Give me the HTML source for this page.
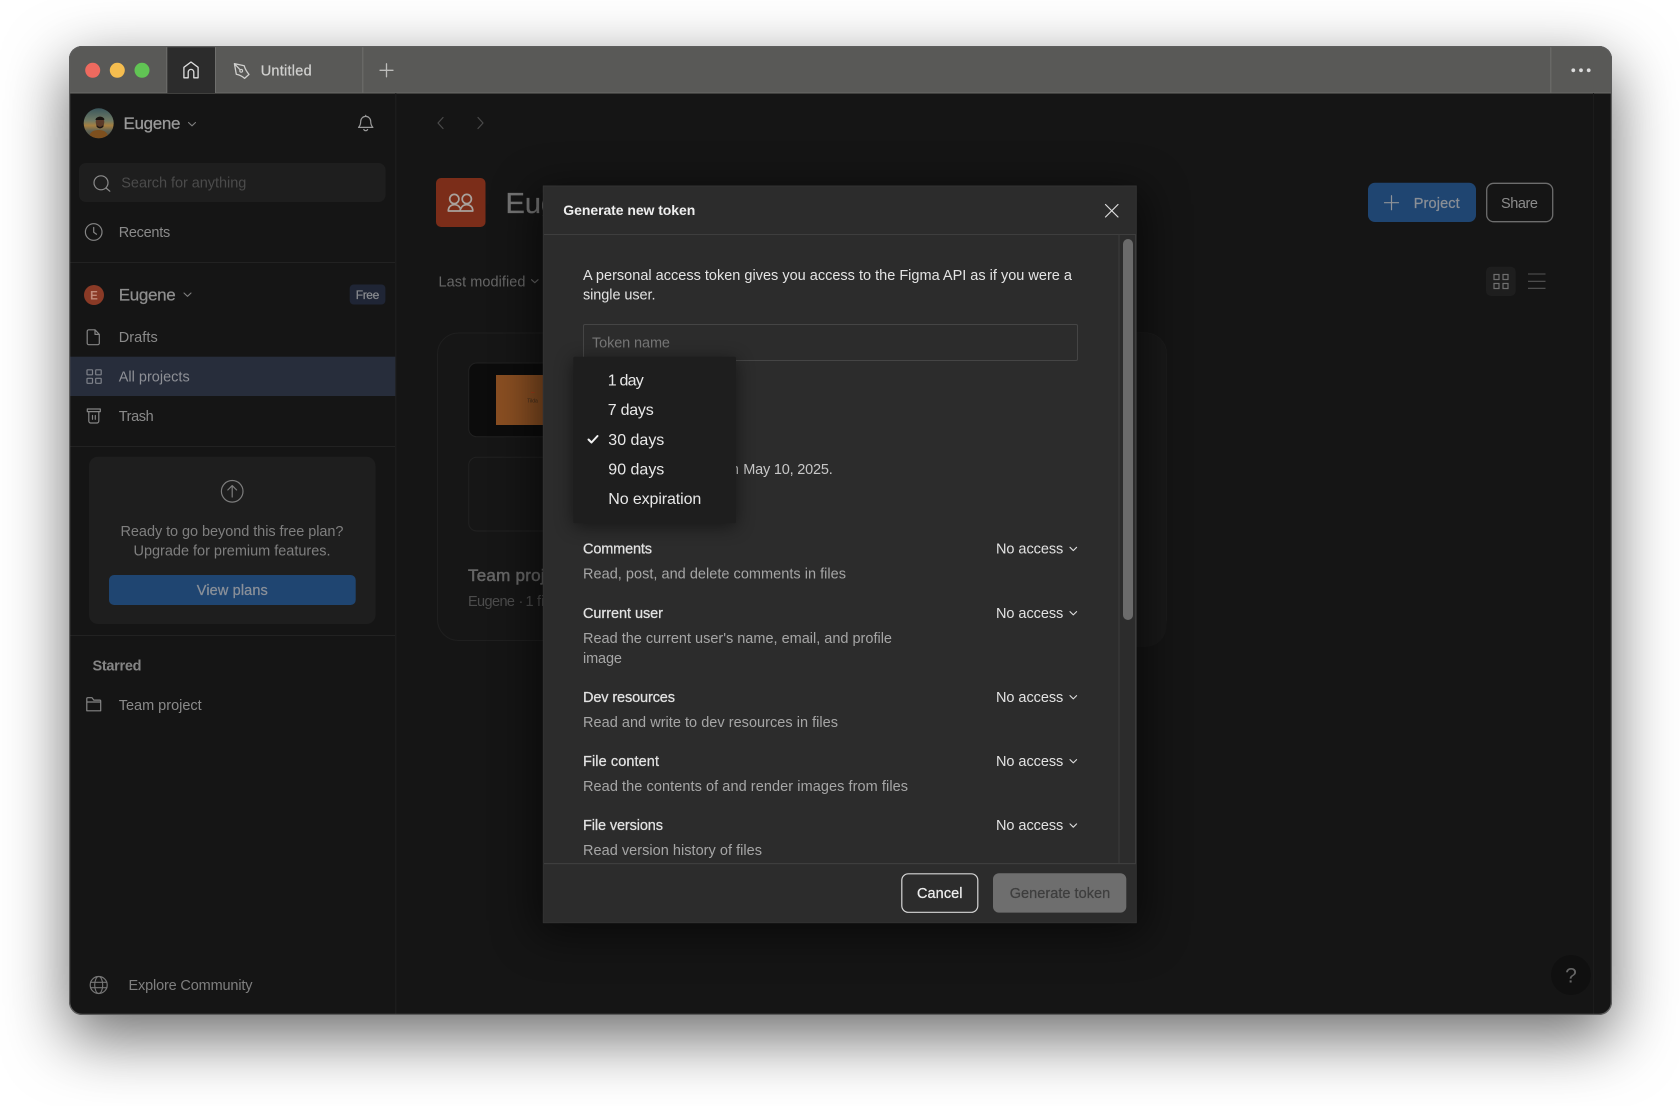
<!DOCTYPE html>
<html lang="en">
<head>
<meta charset="utf-8">
<title>Generate new token</title>
<style>
html,body{margin:0;padding:0;width:1680px;height:1106px;background:#fff;overflow:hidden}
#shadow{position:absolute;left:69px;top:46px;width:1543px;height:969px;border-radius:13px;box-shadow:0 22px 62px 2px rgba(0,0,0,.56)}
svg{position:absolute;left:0;top:0;filter:blur(.35px)}
text{font-family:"Liberation Sans",sans-serif;font-size:14.5px;white-space:pre}
.m{stroke:currentColor;stroke-width:.25px}
.i{fill:none;stroke-linecap:round;stroke-linejoin:round}
</style>
</head>
<body>
<div id="shadow"></div>
<svg width="1680" height="1106" viewBox="0 0 1680 1106" xmlns="http://www.w3.org/2000/svg">
<defs>
<clipPath id="win"><rect x="69" y="46" width="1543" height="969" rx="13"/></clipPath>
<clipPath id="av"><circle cx="98.7" cy="123.3" r="15"/></clipPath>
<filter id="ms" x="-20%" y="-20%" width="140%" height="140%"><feGaussianBlur stdDeviation="22"/></filter>
<filter id="ds" x="-30%" y="-30%" width="160%" height="160%"><feGaussianBlur stdDeviation="9"/></filter>
<linearGradient id="sky" x1="0" y1="0" x2="0" y2="1"><stop offset="0" stop-color="#3a565c"/><stop offset=".4" stop-color="#6f7a64"/><stop offset=".55" stop-color="#a67f40"/><stop offset=".72" stop-color="#5f6254"/><stop offset="1" stop-color="#4a4636"/></linearGradient>
</defs>
<g clip-path="url(#win)">
<rect x="69" y="46" width="1543" height="969" fill="#151515"/>
<!-- titlebar -->
<rect x="69" y="46" width="1543" height="47" fill="#595957"/>
<rect x="69" y="92.5" width="1543" height="1" fill="#6a6a68"/>
<rect x="167" y="47" width="48" height="46" fill="#2c2c2c"/>
<rect x="166.3" y="47" width="1" height="46" fill="#6f6f6d"/>
<rect x="215" y="47" width="1" height="46" fill="#6f6f6d"/>
<rect x="362.3" y="47" width="1" height="46" fill="#6f6f6d"/>
<rect x="1550.3" y="47" width="1" height="46" fill="#6f6f6d"/>
<circle cx="92.7" cy="70.3" r="7.5" fill="#ee6a5f"/>
<circle cx="117.3" cy="70.3" r="7.5" fill="#f5bd4f"/>
<circle cx="142" cy="70.3" r="7.5" fill="#61c454"/>
<path class="i" stroke="#dedede" stroke-width="1.3" d="M183.9 77.8V67.3L191 62l7.1 5.300v10.500h-4.300v-5.600a2.800 2.800 0 0 0-5.600 0v5.600z"/>
<path class="i" stroke="#cfcfcd" stroke-width="1.3" d="M234.4 63.6l9.8 2.2c1 3.3 2.5 6 4.8 8.6l-4.4 4c-2.6-2.5-5.3-3.6-8.3-4.2zM234.6 63.9l5.6 5.9"/>
<circle cx="241.2" cy="70.8" r="1.4" fill="none" stroke="#cfcfcd" stroke-width="1.1"/>
<text x="260.7" y="75.4" fill="#cfcfcd" class="m" style="color:#cfcfcd" textLength="51">Untitled</text>
<path class="i" stroke="#bdbdbb" stroke-width="1.3" d="M380 70.3h13M386.5 63.8v13"/>
<circle cx="1573.3" cy="70.3" r="1.9" fill="#dcdcdc"/><circle cx="1581" cy="70.3" r="1.9" fill="#dcdcdc"/><circle cx="1588.7" cy="70.3" r="1.9" fill="#dcdcdc"/>

<!-- main vertical lines -->
<rect x="395.3" y="93" width="1" height="922" fill="#1f1f1f"/>
<rect x="1593" y="93" width="1" height="922" fill="#1c1c1c"/>

<!-- sidebar top -->
<g clip-path="url(#av)">
<rect x="83" y="108" width="32" height="32" fill="url(#sky)"/>
<path d="M89 140c0-8 4-10 9.500-10s10 2 10 10z" fill="#7d4f1e"/>
<ellipse cx="100" cy="122" rx="4.300" ry="5.500" fill="#5b3a28"/>
<path d="M95.500 120c0-4 8-4.500 9-.5l-1 .5h-7z" fill="#17130f"/>
<path d="M96.500 124c1 3.800 6 3.800 7 0v2.500c-2 2.500-5 2.500-7 0z" fill="#1c140f"/>
</g>
<text x="123.5" y="129" fill="#9a9a9a" class="m" style="color:#9a9a9a;font-size:17px" textLength="57">Eugene</text>
<path class="i" stroke="#7e7e7e" stroke-width="1.1" d="M188.500 122.500l3.500 3.300 3.500-3.300"/>
<path class="i" stroke="#9a9a9a" stroke-width="1.2" d="M358.500 127.400c1.600-1.500 2.200-3 2.200-6a5 5 0 0 1 10 0c0 3 .6 4.500 2.200 6zM363.800 129.500a2.100 2.100 0 0 0 3.800 0M365.700 116.400v-1"/>
<rect x="79" y="163" width="306.500" height="39" rx="7" fill="#1e1e1e"/>
<circle cx="101" cy="182.800" r="7" fill="none" stroke="#8b8b8b" stroke-width="1.200"/>
<path class="i" stroke="#8b8b8b" stroke-width="1.200" d="M106 188l3.800 3.200"/>
<text x="121.300" y="187.700" fill="#4b4b4b" textLength="125">Search for anything</text>
<circle cx="93.700" cy="232" r="8.300" fill="none" stroke="#858585" stroke-width="1.200"/>
<path class="i" stroke="#858585" stroke-width="1.200" d="M93.700 227.500v4.700l2.800 2"/>
<text x="118.700" y="237" fill="#8a8a8a" textLength="51.500">Recents</text>
<rect x="70" y="262" width="325" height="1" fill="#222"/>

<circle cx="94" cy="295" r="10" fill="#8a3a26"/>
<text x="94" y="299.300" fill="#c08a78" text-anchor="middle" style="font-size:11.500px;font-weight:bold">E</text>
<text x="118.700" y="300.500" fill="#8e8e8e" class="m" style="color:#8e8e8e;font-size:17px" textLength="57">Eugene</text>
<path class="i" stroke="#7e7e7e" stroke-width="1.100" d="M184 293l3.500 3.300 3.500-3.300"/>
<rect x="349.700" y="284.500" width="35.700" height="20" rx="4" fill="#1f2535"/>
<text x="367.500" y="298.900" fill="#8a8c90" text-anchor="middle" class="m" style="color:#8a8c90;font-size:12px" textLength="23.500">Free</text>

<path class="i" stroke="#858585" stroke-width="1.200" d="M88.700 329.800h6.300l4.300 4.600v8.800a1.500 1.500 0 0 1-1.500 1.500h-9.100a1.500 1.500 0 0 1-1.500-1.500v-11.900a1.500 1.500 0 0 1 1.500-1.500zM95 329.800v4.600h4.300"/>
<text x="118.700" y="342" fill="#8a8a8a" textLength="39">Drafts</text>
<rect x="70" y="356.700" width="325.300" height="39.300" fill="#272d3b"/>
<g fill="none" stroke="#7f828a" stroke-width="1.200">
<rect x="87" y="369.800" width="5.500" height="5" rx=".6"/><rect x="95.700" y="369.800" width="5.500" height="5" rx=".6"/>
<rect x="87" y="378.300" width="5.500" height="5" rx=".6"/><rect x="95.700" y="378.300" width="5.500" height="5" rx=".6"/>
</g>
<text x="118.700" y="381.300" fill="#8e9096" textLength="71">All projects</text>
<path class="i" stroke="#858585" stroke-width="1.200" d="M87.300 409h13v2.600h-13zM88.800 411.600v9.400a2 2 0 0 0 2 2h6a2 2 0 0 0 2-2v-9.400M92.500 415.500v3.800M95.300 415.500v3.800"/>
<text x="118.700" y="421" fill="#8a8a8a" textLength="35">Trash</text>
<rect x="70" y="446" width="325" height="1" fill="#222"/>

<rect x="89" y="456.700" width="286.500" height="167.300" rx="9" fill="#1e1e1e"/>
<circle cx="232.200" cy="491.300" r="10.800" fill="none" stroke="#7c7c7c" stroke-width="1.200"/>
<path class="i" stroke="#7c7c7c" stroke-width="1.200" d="M232.200 497v-11M227.800 490l4.400-4.400 4.400 4.400"/>
<text x="120.500" y="536" fill="#7f7f7f" textLength="223">Ready to go beyond this free plan?</text>
<text x="133.500" y="555.700" fill="#7f7f7f" textLength="197">Upgrade for premium features.</text>
<rect x="109" y="575" width="246.700" height="30" rx="5" fill="#1f4571"/>
<text x="232.300" y="595" fill="#8a9099" text-anchor="middle" class="m" style="color:#8a9099" textLength="71">View plans</text>
<rect x="70" y="635" width="325" height="1" fill="#222"/>
<text x="92.500" y="670.500" fill="#858585" style="font-weight:bold;font-size:14.500px" textLength="49">Starred</text>
<path class="i" stroke="#858585" stroke-width="1.200" d="M86.800 698.700a1 1 0 0 1 1-1h4.200l1.800 2.400h6a.9.9 0 0 1 .9.900v9.800h-13.900zM86.800 702h13.900"/>
<text x="118.700" y="710" fill="#8a8a8a" textLength="83">Team project</text>
<circle cx="98.700" cy="985" r="8.500" fill="none" stroke="#777" stroke-width="1.200"/>
<ellipse cx="98.700" cy="985" rx="4" ry="8.500" fill="none" stroke="#777" stroke-width="1.100"/>
<path class="i" stroke="#777" stroke-width="1.100" d="M90.500 982.300h16.400M90.500 987.700h16.400"/>
<text x="128.500" y="990" fill="#7f7f7f" textLength="124">Explore Community</text>

<!-- main content -->
<path class="i" stroke="#4a4a4a" stroke-width="1.200" d="M443 117.500l-5 5.500 5 5.500M478 117.500l5 5.500-5 5.500"/>
<rect x="436" y="178" width="49.500" height="49" rx="5" fill="#7b2d19"/>
<g fill="none" stroke="#a9a29d" stroke-width="1.700" stroke-linecap="round" stroke-linejoin="round">
<circle cx="454.300" cy="199" r="4.600"/><circle cx="466.800" cy="199" r="4.600"/>
<path d="M448.300 211c0-4 2.500-6.300 6-6.300 2.700 0 4.500 1.100 5.500 3M472.800 211c0-4-2.500-6.300-6-6.300-2.700 0-4.800 1.400-5.800 3.600-.7 1-1 1.900-1 2.700M448.300 211h24.500"/>
</g>
<text x="505.500" y="213" fill="#757575" class="m" style="color:#757575;font-size:29px">Eugene</text>
<text x="438.500" y="286.300" fill="#666" textLength="87">Last modified</text>
<path class="i" stroke="#666" stroke-width="1.100" d="M531.500 279.700l3.300 3 3.300-3"/>
<rect x="437.500" y="333" width="729" height="307.500" rx="21" fill="#161616" stroke="#1f1f1f"/>
<rect x="900" y="333" width="266.500" height="314" rx="21" fill="#191919"/>
<rect x="468.700" y="363" width="300" height="73.700" rx="8" fill="#0c0c0c" stroke="#212121"/>
<rect x="496" y="375" width="100" height="50" fill="#8a4f22"/>
<rect x="531" y="392" width="3.500" height=".8" fill="#b03a1a"/>
<text x="532.500" y="402.500" fill="#3d2c1c" text-anchor="middle" style="font-size:5px">Tilda</text>
<rect x="468.700" y="457.300" width="300" height="73.700" rx="8" fill="#161616" stroke="#212121"/>
<text x="468" y="581" fill="#666" class="m" style="color:#666;font-size:17px;stroke-width:.5px" textLength="100">Team project</text>
<text x="468 " y="606" fill="#4c4c4c"><tspan x="468" textLength="47">Eugene</tspan><tspan x="518.500">·</tspan><tspan x="525.500">1</tspan><tspan x="537">file</tspan></text>

<rect x="1368" y="182.700" width="108" height="39.300" rx="7" fill="#1f4571"/>
<path class="i" stroke="#8f9398" stroke-width="1.200" d="M1384.500 202.700h14M1391.500 195.700v14"/>
<text x="1413.700" y="207.800" fill="#8a8f96" class="m" style="color:#8a8f96" textLength="46">Project</text>
<rect x="1486.700" y="183.300" width="66" height="38.400" rx="7" fill="none" stroke="#6d6d6d" stroke-width="1.300"/>
<text x="1501" y="207.800" fill="#8c8c8c" textLength="37">Share</text>
<rect x="1486" y="266.700" width="29.700" height="29.300" rx="5" fill="#1e1e1e"/>
<g fill="none" stroke="#6f6f6f" stroke-width="1.200">
<rect x="1494" y="274.500" width="5" height="5"/><rect x="1503" y="274.500" width="5" height="5"/>
<rect x="1494" y="283.500" width="5" height="5"/><rect x="1503" y="283.500" width="5" height="5"/>
</g>
<path stroke="#555" stroke-width="1.100" d="M1528 274h17.500M1528 281.300h17.500M1528 288.300h17.500"/>
<circle cx="1571" cy="975" r="20" fill="#101010"/>
<text x="1571" y="982.500" fill="#666" text-anchor="middle" style="font-size:21px">?</text>

<!-- modal -->
<rect x="535" y="190" width="610" height="745" fill="#000" opacity=".55" filter="url(#ms)"/>
<rect x="543.300" y="186" width="593" height="736.700" fill="#2c2c2c" stroke="#323232"/>
<rect x="544" y="234" width="592" height="1" fill="#3e3e3e"/>
<text x="563.300" y="215" fill="#eee" style="font-size:14px;font-weight:bold" textLength="132">Generate new token</text>
<path class="i" stroke="#ddd" stroke-width="1.200" d="M1105.500 204.500l12.500 12.500M1118 204.500L1105.500 217"/>
<text x="583" y="279.800" fill="#e4e4e4" textLength="489">A personal access token gives you access to the Figma API as if you were a</text>
<text x="583" y="299.300" fill="#e4e4e4" textLength="72.500">single user.</text>
<rect x="583.500" y="324.500" width="494" height="36" rx="1.500" fill="none" stroke="#454545" stroke-width="1"/>
<text x="592" y="347.300" fill="#777" textLength="78">Token name</text>
<text x="725" y="474" fill="#c8c8c8" textLength="14">on</text>
<text x="743.300" y="474" fill="#c8c8c8" textLength="89.500">May 10, 2025.</text>

<g fill="#e2e2e2" class="r">
<text x="583" y="553.600" class="m" style="color:#e2e2e2" textLength="69">Comments</text>
<text x="583" y="617.900" class="m" style="color:#e2e2e2" textLength="80">Current user</text>
<text x="583" y="701.900" class="m" style="color:#e2e2e2" textLength="92">Dev resources</text>
<text x="583" y="765.900" class="m" style="color:#e2e2e2" textLength="76">File content</text>
<text x="583" y="829.900" class="m" style="color:#e2e2e2" textLength="80">File versions</text>
<text x="996" y="553.600" textLength="67.300">No access</text>
<text x="996" y="617.900" textLength="67.300">No access</text>
<text x="996" y="701.900" textLength="67.300">No access</text>
<text x="996" y="765.900" textLength="67.300">No access</text>
<text x="996" y="829.900" textLength="67.300">No access</text>
</g>
<g fill="#a6a6a6">
<text x="583" y="578.500" textLength="263">Read, post, and delete comments in files</text>
<text x="583" y="642.800" textLength="309">Read the current user's name, email, and profile</text>
<text x="583" y="662.800" textLength="39">image</text>
<text x="583" y="726.800" textLength="255">Read and write to dev resources in files</text>
<text x="583" y="790.800" textLength="325">Read the contents of and render images from files</text>
<text x="583" y="855" textLength="179">Read version history of files</text>
</g>
<g class="i" stroke="#ddd" stroke-width="1.100">
<path d="M1070 547.300l3.300 3.300 3.300-3.300"/>
<path d="M1070 611.600l3.300 3.300 3.300-3.300"/>
<path d="M1070 695.600l3.300 3.300 3.300-3.300"/>
<path d="M1070 759.600l3.300 3.300 3.300-3.300"/>
<path d="M1070 823.900l3.300 3.300 3.300-3.300"/>
</g>
<rect x="1118.500" y="234" width="1" height="629" fill="#3c3c3c"/>
<rect x="1135" y="234" width="1" height="629" fill="#3c3c3c"/>
<rect x="1123" y="239" width="10" height="381" rx="5" fill="#6b6b6b"/>
<rect x="544" y="863" width="592" height="1.200" fill="#3e3e3e"/>
<rect x="901.800" y="873.800" width="76" height="38.500" rx="6.500" fill="none" stroke="#d6d6d6" stroke-width="1.200"/>
<text x="917" y="898" fill="#eee" class="m" style="color:#eee" textLength="45.500">Cancel</text>
<rect x="993" y="873.300" width="133.300" height="39.300" rx="6" fill="#6e6e6e"/>
<text x="1009.700" y="898" fill="#3e3e3e" class="m" style="color:#3e3e3e" textLength="100.500">Generate token</text>

<!-- dropdown -->
<rect x="573.300" y="360" width="162.700" height="166.300" fill="#000" opacity=".5" filter="url(#ds)"/>
<rect x="573.300" y="356.700" width="162.700" height="166.600" rx="1.500" fill="#1e1e1e"/>
<g fill="#e8e8e8">
<text x="607.700" y="385.700" style="font-size:16px" textLength="36">1 day</text>
<text x="607.700" y="415.200" style="font-size:16px" textLength="46">7 days</text>
<text x="608.300" y="444.800" style="font-size:16px" textLength="56">30 days</text>
<text x="608.300" y="474.400" style="font-size:16px" textLength="56">90 days</text>
<text x="608.300" y="504" style="font-size:16px" textLength="93">No expiration</text>
</g>
<path class="i" stroke="#f2f2f2" stroke-width="2" d="M588.500 439.500l3 3 6-6.500"/>

<!-- window edge -->
<rect x="69.600" y="46.600" width="1541.800" height="967.800" rx="12.500" fill="none" stroke="#5c5c5c" stroke-width="1.300"/>
</g>
</svg>
</body>
</html>
